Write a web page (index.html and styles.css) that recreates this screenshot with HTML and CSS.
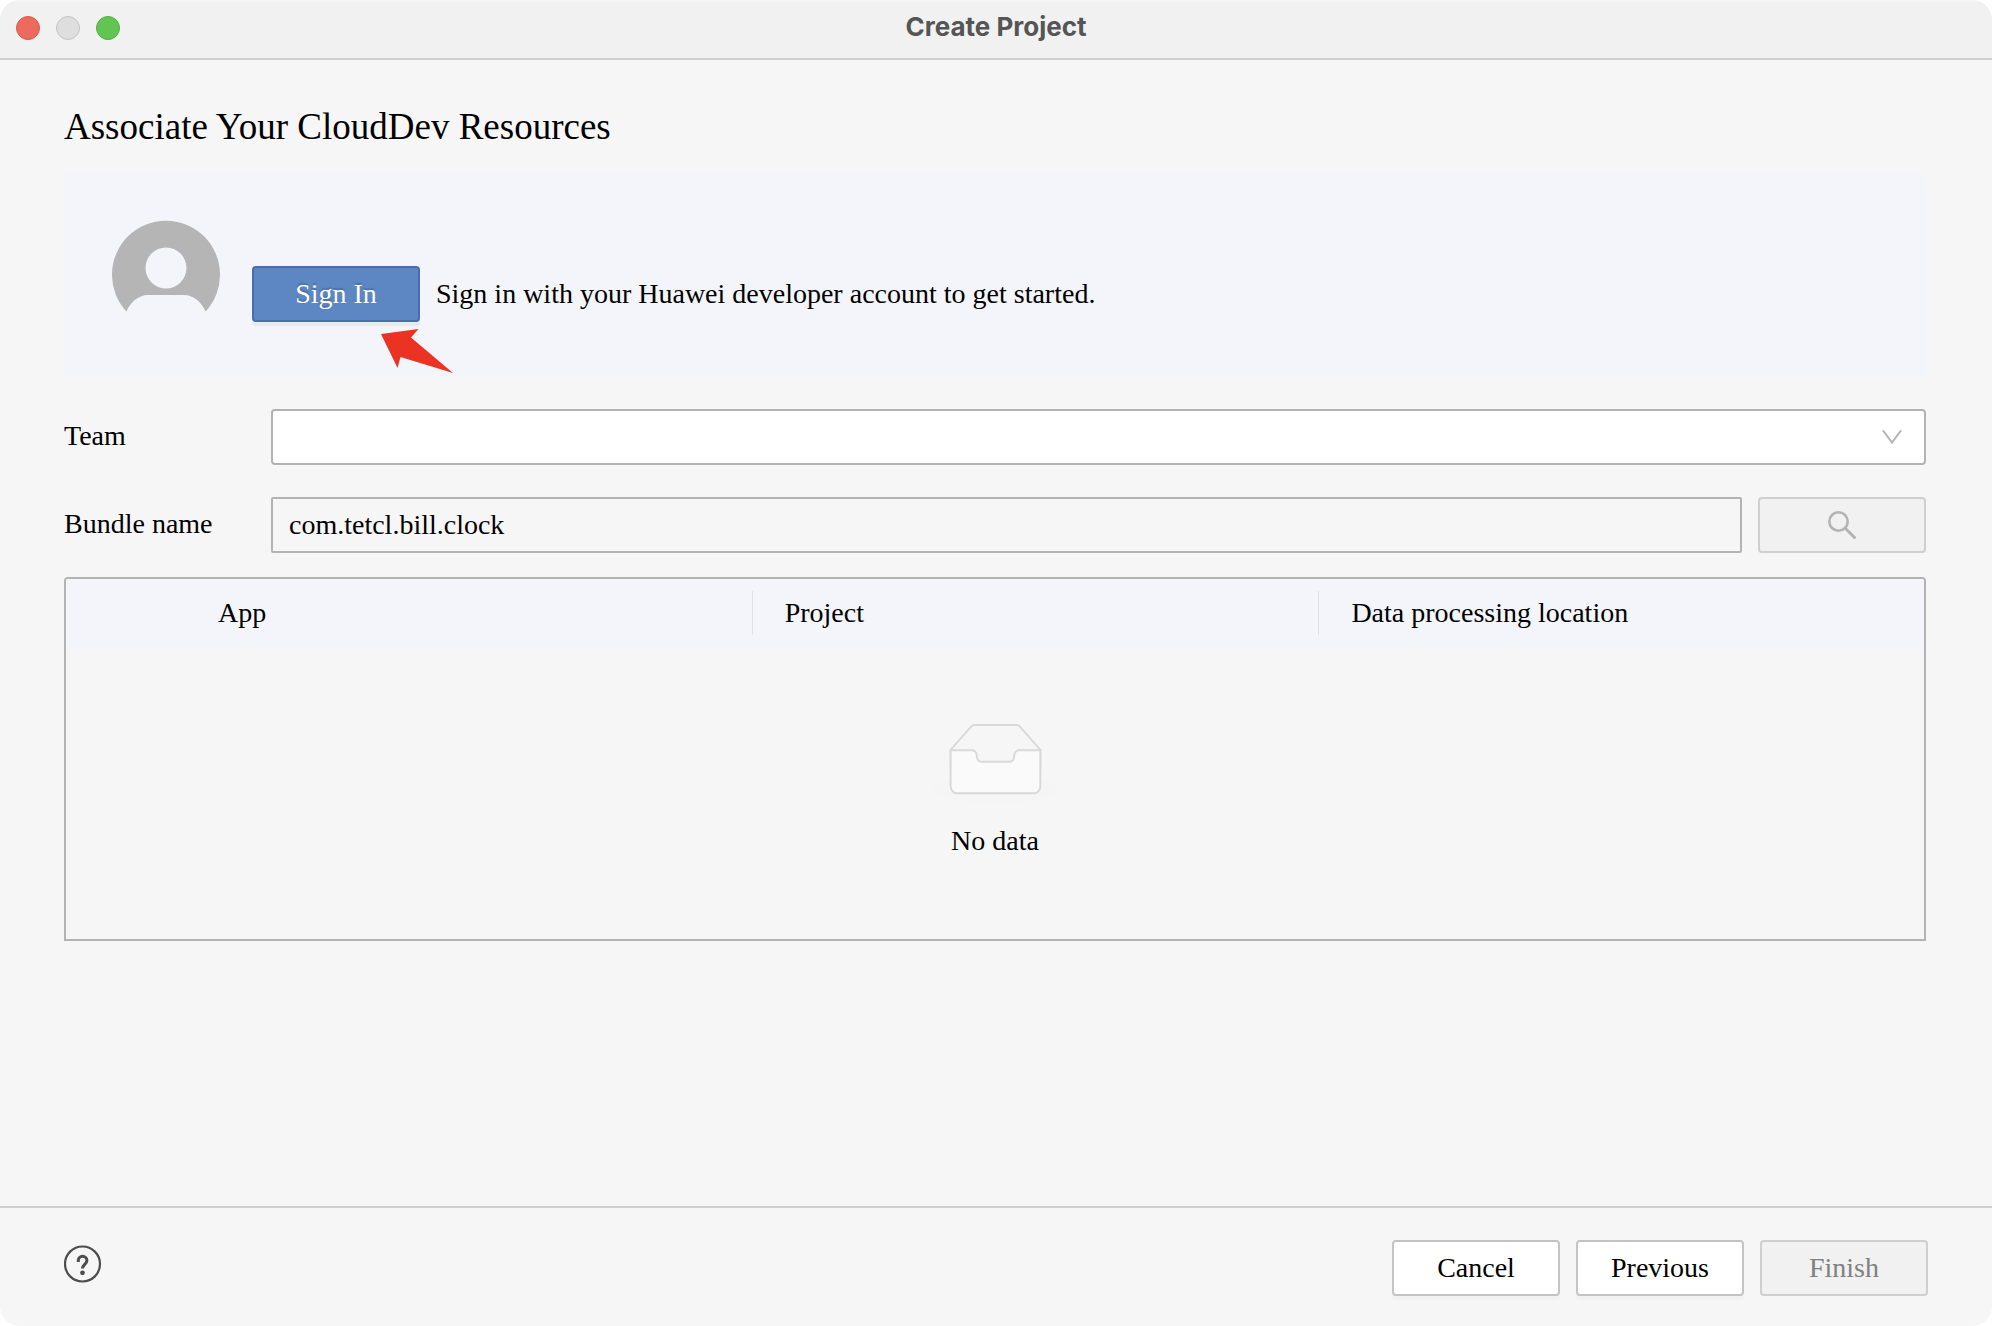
FILE: index.html
```html
<!DOCTYPE html>
<html lang="en">
<head>
  <meta charset="utf-8">
  <meta name="viewport" content="width=device-width, initial-scale=1">
  <title>Create Project</title>
  <link rel="stylesheet" href="styles.css">
</head>
<body>
  <div class="window">
    <header class="titlebar">
      <div class="lights">
        <button class="light light-close" type="button" aria-label="Close"></button>
        <button class="light light-min" type="button" aria-label="Minimize" disabled></button>
        <button class="light light-zoom" type="button" aria-label="Zoom"></button>
      </div>
      <div class="titlebar-text">Create Project</div>
    </header>

    <main class="content">
      <h1 class="heading">Associate Your CloudDev Resources</h1>

      <section class="account">
        <svg class="avatar" viewBox="0 0 108 92" aria-hidden="true">
          <path fill="#b5b5b5" fill-rule="evenodd" d="M14.500 91.500A54 54 0 1 1 93.500 91.500C90 83 82 75 72 75H36C26 75 18 83 14.500 91.500ZM54 27.500a20.500 20.500 0 1 0 0 41a20.500 20.500 0 1 0 0-41Z"/>
        </svg>
        <div class="signin">
          <button class="btn btn-primary" type="button">Sign In</button>
          <svg class="pointer" viewBox="0 0 72 44" aria-hidden="true">
            <path fill="#eb3323" d="M0 5L37.500 0L30 8.500L72 44L19.500 28L16.500 39Z"/>
          </svg>
        </div>
        <p class="account-text">Sign in with your Huawei developer account to get started.</p>
      </section>

      <form class="form">
        <div class="row">
          <label class="label" for="team">Team</label>
          <div class="select-wrap">
            <select class="field select" id="team"><option></option></select>
            <svg class="chevron" viewBox="0 0 20 14" aria-hidden="true">
              <path fill="none" stroke="#b3b3b3" stroke-width="2" d="M1 .5L10 12.500L19 .5"/>
            </svg>
          </div>
        </div>
        <div class="row">
          <label class="label" for="bundle">Bundle name</label>
          <input class="field bundle" id="bundle" type="text" value="com.tetcl.bill.clock" readonly>
          <button class="btn" type="button" aria-label="Search" disabled>
            <svg class="search" viewBox="0 0 28 28" aria-hidden="true">
              <g fill="none" stroke="#b3b3b3">
                <circle cx="10.500" cy="10.500" r="9.200" stroke-width="2.600"/>
                <path stroke-width="3" d="M17 17L27.500 27.500"/>
              </g>
            </svg>
          </button>
        </div>
      </form>

      <div class="table-box">
        <table class="table">
          <colgroup>
            <col class="col-pick"><col class="col-app"><col class="col-project"><col>
          </colgroup>
          <thead>
            <tr>
              <td></td>
              <th scope="col"><div class="cell">App</div></th>
              <th scope="col"><div class="cell cell-split">Project</div></th>
              <th scope="col"><div class="cell cell-split">Data processing location</div></th>
            </tr>
          </thead>
          <tbody>
            <tr>
              <td colspan="4">
                <div class="empty">
                  <svg class="empty-icon" viewBox="0 0 64 41" aria-hidden="true">
                    <g transform="translate(0 1)" fill="none" fill-rule="evenodd">
                      <ellipse fill="#f5f5f5" cx="32" cy="33" rx="32" ry="7"/>
                      <g stroke="#d9d9d9">
                        <path d="M55 12.760L44.854 1.258C44.367.474 43.656 0 42.907 0H21.093c-.749 0-1.460.474-1.947 1.257L9 12.761V22h46v-9.240z"/>
                        <path fill="#fafafa" d="M41.613 15.931c0-1.605.994-2.930 2.227-2.931H55v18.137C55 33.260 53.680 35 52.050 35h-40.100C10.320 35 9 33.259 9 31.137V13h11.160c1.233 0 2.227 1.323 2.227 2.928v.022c0 1.605 1.005 2.901 2.237 2.901h14.752c1.232 0 2.237-1.308 2.237-2.913v-.007z"/>
                      </g>
                    </g>
                  </svg>
                  <span>No data</span>
                </div>
              </td>
            </tr>
          </tbody>
        </table>
      </div>
    </main>

    <footer class="footer">
      <button class="help" type="button" aria-label="Help">
        <svg class="help-icon" viewBox="0 0 38 38" aria-hidden="true">
          <circle cx="18.500" cy="19" r="17.500" fill="none" stroke="#4d4d4d" stroke-width="2.200"/>
          <path fill="none" stroke="#4d4d4d" stroke-width="3" d="M14.300 17V15.500a4.300 4.300 0 0 1 8.600 0c0 3.600-4.400 4.200-4.400 8"/>
          <circle cx="18.500" cy="27.800" r="2.400" fill="#4d4d4d"/>
        </svg>
      </button>
      <div class="actions">
        <button class="btn" type="button">Cancel</button>
        <button class="btn" type="button">Previous</button>
        <button class="btn" type="button" disabled>Finish</button>
      </div>
    </footer>
  </div>
</body>
</html>
```
FILE: styles.css
```css
* {
  box-sizing: border-box;
}

body {
  margin: 0;
  background: #fff;
  color: #000;
  font-family: "Liberation Serif", "Times New Roman", serif;
  font-size: 28px;
  line-height: 32px;
}

button,
input,
select {
  margin: 0;
  font: inherit;
  color: inherit;
}

svg {
  display: block;
}

.window {
  display: flex;
  flex-direction: column;
  min-height: 100vh;
  overflow: hidden;
  border-radius: 20px;
  background: #f6f6f6;
}

.titlebar {
  display: grid;
  grid-template-columns: 1fr auto 1fr;
  align-items: center;
  height: 60px;
  padding: 0 16px 4px;
  border-top: 2px solid #f6f6f6;
  border-bottom: 2px solid #cfcfcf;
  background: #f1f1f1;
}

.titlebar-text {
  padding-bottom: 2px;
  color: #555;
  font: 700 26px/32px Inter, sans-serif;
}

.lights {
  display: flex;
  gap: 16px;
}

.light {
  width: 24px;
  height: 24px;
  padding: 0;
  border: 1px solid;
  border-radius: 50%;
}

.light-close {
  border-color: #d9584c;
  background: #ed6a5e;
}

.light-min {
  border-color: #c4c4c4;
  background: #dedede;
}

.light-zoom {
  border-color: #51b043;
  background: #61c554;
}

.content {
  flex: 1;
  padding: 47px 66px 47px 64px;
}

.heading {
  margin: 0 0 27px;
  font-size: 37px;
  font-weight: 400;
  line-height: 40px;
}

.account {
  display: flex;
  align-items: flex-start;
  height: 203px;
  padding: 46px 48px;
  background: #f3f5fa;
}

.avatar {
  width: 108px;
  height: 92px;
  margin-right: 32px;
}

.signin {
  position: relative;
  margin: 46px 16px 0 0;
}

.pointer {
  position: absolute;
  top: 63px;
  left: 129px;
  width: 72px;
  height: 44px;
}

.account-text {
  margin: 58px 0 0;
}

.btn {
  display: flex;
  align-items: center;
  justify-content: center;
  width: 168px;
  height: 56px;
  padding: 0;
  border: 2px solid #c4c4c4;
  border-radius: 4px;
  background: #fff;
  box-shadow: 0 4px 0 #f1f1f1;
}

.btn:disabled {
  border-color: #cfcfcf;
  background: #f1f1f1;
  box-shadow: none;
  color: #808080;
}

.btn-primary {
  border-color: #4c6cb0;
  background: #5d87c3;
  box-shadow: 0 4px 0 #e6e9ef;
  color: #fff;
  text-shadow: 0 -2px 1px #4c70ab;
}

.form {
  display: grid;
  gap: 32px;
  margin: 32px 0 24px;
}

.row {
  display: flex;
  align-items: center;
}

.row .btn {
  margin-left: 16px;
}

.label {
  width: 207px;
  padding-bottom: 2px;
}

.field {
  height: 56px;
  padding: 0 16px;
  border: 2px solid #b3b3b3;
  border-radius: 4px;
}

.select-wrap {
  position: relative;
  flex: 1;
}

.select {
  display: block;
  width: 100%;
  appearance: none;
  background: #fff;
}

.chevron {
  position: absolute;
  top: 21px;
  right: 24px;
  width: 20px;
  height: 14px;
  pointer-events: none;
}

.bundle {
  flex: 1;
  min-width: 0;
  border-radius: 2px;
  background: #f6f6f6;
}

.search {
  width: 28px;
  height: 28px;
}

.table-box {
  overflow: hidden;
  border: 2px solid #b3b3b3;
  border-radius: 4px 4px 0 0;
}

.table {
  width: 100%;
  table-layout: fixed;
  border-collapse: collapse;
}

.table th,
.table td {
  padding: 0;
  font-weight: 400;
  text-align: left;
}

.table thead {
  height: 68px;
  background: #f3f5fa;
}

.col-pick {
  width: 119px;
}

.col-app,
.col-project {
  width: 30.5%;
}

.cell {
  padding: 6px 32px;
  border-left: 1px solid transparent;
}

.cell-split {
  border-color: #e0e2e8;
}

.empty {
  display: flex;
  flex-direction: column;
  align-items: center;
  gap: 22px;
  padding: 76px 0 82px;
}

.empty-icon {
  width: 125px;
  height: 80px;
}

.footer {
  display: flex;
  align-items: flex-start;
  justify-content: space-between;
  height: 120px;
  padding: 32px 64px 0;
  border-top: 2px solid #cfcfcf;
}

.help {
  margin-top: 5px;
  padding: 0;
  border: 0;
  background: none;
}

.help-icon {
  width: 38px;
  height: 38px;
}

.actions {
  display: flex;
  gap: 16px;
}
```
